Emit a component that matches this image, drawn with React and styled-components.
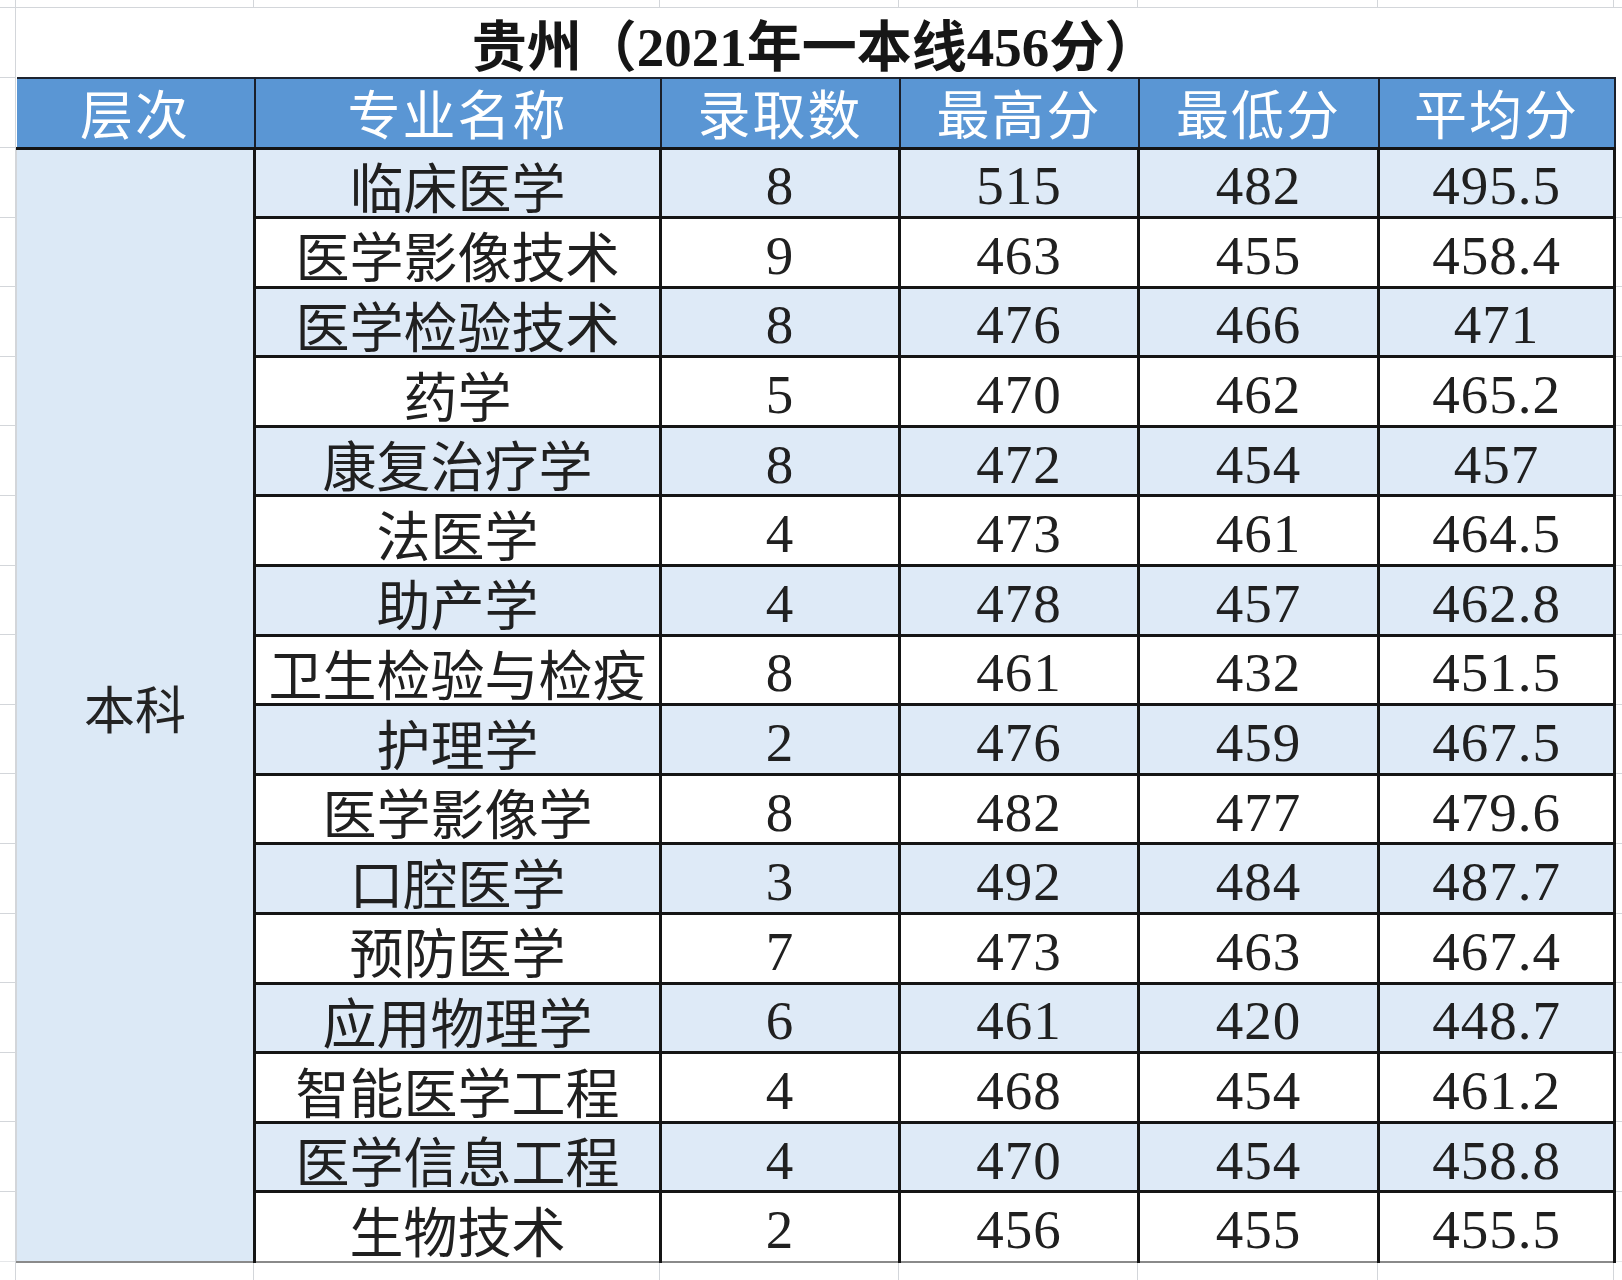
import styled, { createGlobalStyle } from 'styled-components';

const GlobalStyle = createGlobalStyle`
  html, body {
    margin: 0;
    padding: 0;
    background: #fff;
  }
`;

const GRID = '#d3d6da';
const COLS = [238, 406, 239, 239, 240, 236];
const ROW_H = 69.6;

// spreadsheet gridlines that show around the table
const edges = COLS.reduce((acc, w) => [...acc, acc[acc.length - 1] + w], [16]).slice(1);
const line = `linear-gradient(${GRID}, ${GRID})`;
const ticks = `repeating-linear-gradient(to bottom, transparent 0, transparent ${ROW_H - 1}px, ${GRID} ${ROW_H - 1}px, ${GRID} ${ROW_H}px)`;
const layers = [
  [line, '0 7px', '100% 1px'],
  [line, '15px 0', '1px 100%'],
  [line, '0 77px', '15px 1px'],
  [line, '0 147px', '15px 1px'],
  [ticks, '0 148px', `15px ${ROW_H * 16}px`],
  [ticks, '1615px 148px', `7px ${ROW_H * 16}px`],
  ...edges.map((x) => [line, `${x - 1}px 0`, '1px 8px']),
  ...edges.map((x) => [line, `${x - 1}px 1262px`, '1px 18px']),
];

const Sheet = styled.div`
  width: 1622px;
  height: 1280px;
  box-sizing: border-box;
  padding: 8px 0 0 16px;
  background-color: #fff;
  background-repeat: no-repeat;
  background-image: ${layers.map((l) => l[0]).join(', ')};
  background-position: ${layers.map((l) => l[1]).join(', ')};
  background-size: ${layers.map((l) => l[2]).join(', ')};
  overflow: hidden;
`;

const Table = styled.table`
  border-collapse: collapse;
  table-layout: fixed;
  width: 1598px;
  font-family: 'Liberation Serif', 'Noto Sans CJK SC', serif;
  color: #1f1f1f;

  td, th {
    box-sizing: border-box;
  }
`;

const TitleCell = styled.td`
  height: 70px;
  padding: 10px 0 0 0;
  text-align: center;
  vertical-align: middle;
  font-size: 55px;
  font-weight: 700;
  line-height: 1;
  color: #161616;
  background: #fff;
`;

const HeadCell = styled.th`
  height: 70px;
  padding: 0;
  background: #5a96d4;
  color: #fff;
  font-family: 'Noto Sans CJK SC', sans-serif;
  font-size: 53px;
  font-weight: 400;
  line-height: 1;
  text-align: center;
  vertical-align: middle;
  letter-spacing: 2px;
  border-top: 2px solid #1d2430;
  border-bottom: 3px solid #141414;
  border-left: ${(p) => (p.$first ? 'none' : '2px solid #1a1f2a')};
  border-right: 2px solid #1a1f2a;
`;

const LevelCell = styled.td`
  padding: 4px 0 0 0;
  background: #dce9f6;
  font-family: 'Noto Sans CJK SC', sans-serif;
  font-size: 51px;
  line-height: 1;
  text-align: center;
  vertical-align: middle;
  color: #232323;
  border-left: 1px solid ${GRID};
  border-right: 3px solid #151515;
  border-bottom: 2px solid #8a8a8a;
`;

const Cell = styled.td`
  height: ${ROW_H}px;
  padding: 6px 0 0 0;
  background: ${(p) => (p.$shade ? '#deeaf7' : '#fff')};
  font-size: ${(p) => (p.$num ? '55px' : '54px')};
  font-family: ${(p) =>
    p.$num ? "'Liberation Serif', serif" : "'Noto Sans CJK SC', sans-serif"};
  letter-spacing: ${(p) => (p.$num ? '1px' : '0')};
  line-height: 1;
  text-align: center;
  vertical-align: middle;
  white-space: nowrap;
  color: #202020;
  border: 3px solid #151515;
  border-bottom: ${(p) => (p.$last ? '2px solid #8a8a8a' : '3px solid #151515')};
`;

const headers = ['层次', '专业名称', '录取数', '最高分', '最低分', '平均分'];

const rows = [
  ['临床医学', '8', '515', '482', '495.5'],
  ['医学影像技术', '9', '463', '455', '458.4'],
  ['医学检验技术', '8', '476', '466', '471'],
  ['药学', '5', '470', '462', '465.2'],
  ['康复治疗学', '8', '472', '454', '457'],
  ['法医学', '4', '473', '461', '464.5'],
  ['助产学', '4', '478', '457', '462.8'],
  ['卫生检验与检疫', '8', '461', '432', '451.5'],
  ['护理学', '2', '476', '459', '467.5'],
  ['医学影像学', '8', '482', '477', '479.6'],
  ['口腔医学', '3', '492', '484', '487.7'],
  ['预防医学', '7', '473', '463', '467.4'],
  ['应用物理学', '6', '461', '420', '448.7'],
  ['智能医学工程', '4', '468', '454', '461.2'],
  ['医学信息工程', '4', '470', '454', '458.8'],
  ['生物技术', '2', '456', '455', '455.5'],
];

const App = () => {
  return (
    <>
      <GlobalStyle />
      <Sheet>
        <Table>
          <colgroup>
            {COLS.map((w, i) => (
              <col key={i} style={{ width: w }} />
            ))}
          </colgroup>
          <thead>
            <tr>
              <TitleCell colSpan={6}>贵州（2021年一本线456分）</TitleCell>
            </tr>
            <tr>
              {headers.map((h, i) => (
                <HeadCell key={h} $first={i === 0}>
                  {h}
                </HeadCell>
              ))}
            </tr>
          </thead>
          <tbody>
            {rows.map(([name, ...nums], i) => (
              <tr key={name}>
                {i === 0 ? <LevelCell rowSpan={rows.length}>本科</LevelCell> : null}
                <Cell $shade={i % 2 === 0} $last={i === rows.length - 1}>
                  {name}
                </Cell>
                {nums.map((n, j) => (
                  <Cell key={j} $num $shade={i % 2 === 0} $last={i === rows.length - 1}>
                    {n}
                  </Cell>
                ))}
              </tr>
            ))}
          </tbody>
        </Table>
      </Sheet>
    </>
  );
};

export default App;
